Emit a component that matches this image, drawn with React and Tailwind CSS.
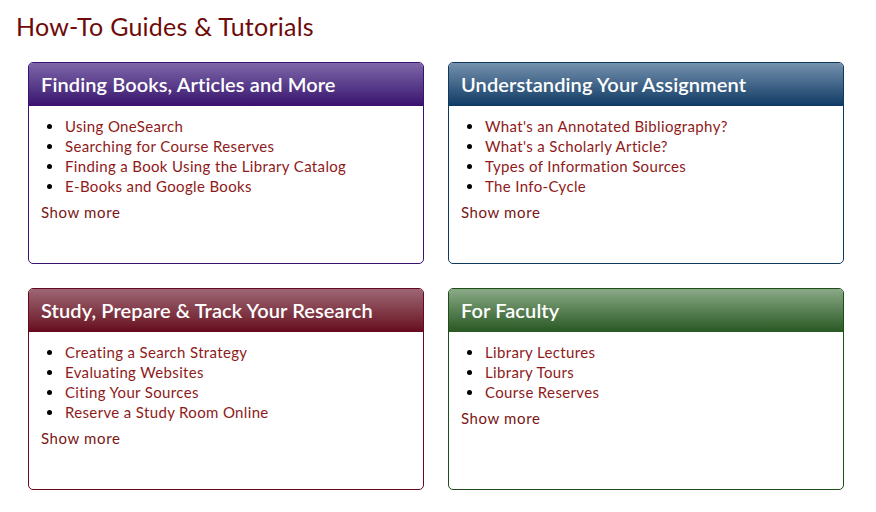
const sections = [
  {
    title: 'Finding Books, Articles and More',
    header: 'bg-gradient-to-b from-[#7e66a8] to-[#3a0f6e]',
    border: 'border-[#3a1270]',
    links: [
      'Using OneSearch',
      'Searching for Course Reserves',
      'Finding a Book Using the Library Catalog',
      'E-Books and Google Books',
    ],
  },
  {
    title: 'Understanding Your Assignment',
    header: 'bg-gradient-to-b from-[#7591ad] to-[#0c3b65]',
    border: 'border-[#0f3a60]',
    links: [
      "What's an Annotated Bibliography?",
      "What's a Scholarly Article?",
      'Types of Information Sources',
      'The Info-Cycle',
    ],
  },
  {
    title: 'Study, Prepare & Track Your Research',
    header: 'bg-gradient-to-b from-[#9d6676] to-[#66081f]',
    border: 'border-[#66081f]',
    links: [
      'Creating a Search Strategy',
      'Evaluating Websites',
      'Citing Your Sources',
      'Reserve a Study Room Online',
    ],
  },
  {
    title: 'For Faculty',
    header: 'bg-gradient-to-b from-[#8aaa87] to-[#285822]',
    border: 'border-[#1f4d1a]',
    links: ['Library Lectures', 'Library Tours', 'Course Reserves'],
  },
];

function GuideCard({ section }) {
  return (
    <div className={`h-[202px] rounded-[5px] border bg-white overflow-hidden ${section.border}`}>
      <div className={`h-[43px] flex items-center px-3 pb-[2px] ${section.header}`}>
        <h2 className="text-[20px] font-semibold text-white tracking-[0.1px]">{section.title}</h2>
      </div>
      <ul className="list-disc pl-[35px] pt-[10px] text-[15px] leading-[20px] tracking-[0.35px] marker:text-black">
        {section.links.map((link) => (
          <li key={link} className="pl-[1px]">
            <a href="#" className="text-[#8e1a1a]">
              {link}
            </a>
          </li>
        ))}
      </ul>
      <a href="#" className="block px-3 pt-[6px] text-[15px] leading-[20px] tracking-[0.6px] text-[#7a1515]">
        Show more
      </a>
    </div>
  );
}

export default function App() {
  return (
    <div className="min-h-screen bg-white pt-[10px] font-['Lato',sans-serif]">
      {/* page title */}
      <h1 className="pl-[16px] text-[25px] leading-[32px] tracking-[0.25px] text-[#6e0a0a]">How-To Guides &amp; Tutorials</h1>

      <div className="mt-[20px] ml-[28px] grid grid-cols-[396px_396px] gap-[24px]">
        {sections.map((s) => (
          <GuideCard key={s.title} section={s} />
        ))}
      </div>
    </div>
  );
}
